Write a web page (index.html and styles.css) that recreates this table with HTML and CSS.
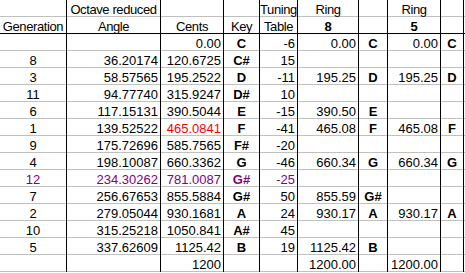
FILE: index.html
```html
<!DOCTYPE html>
<html>
<head>
<meta charset="utf-8">
<link rel="stylesheet" href="styles.css">
</head>
<body>
<div class="sheet">
  <div class="row head"><span></span><span>Octave reduced</span><span></span><span></span><span>Tuning</span><span>Ring</span><span></span><span>Ring</span><span></span></div>
  <div class="row head sep"><span>Generation</span><span>Angle</span><span>Cents</span><span>Key</span><span>Table</span><span class="b">8</span><span></span><span class="b">5</span><span></span></div>
  <div class="row"><span></span><span></span><span>0.00</span><span>C</span><span>-6</span><span>0.00</span><span>C</span><span>0.00</span><span>C</span></div>
  <div class="row"><span>8</span><span>36.20174</span><span>120.6725</span><span>C#</span><span>15</span><span></span><span></span><span></span><span></span></div>
  <div class="row"><span>3</span><span>58.57565</span><span>195.2522</span><span>D</span><span>-11</span><span>195.25</span><span>D</span><span>195.25</span><span>D</span></div>
  <div class="row"><span>11</span><span>94.77740</span><span>315.9247</span><span>D#</span><span>10</span><span></span><span></span><span></span><span></span></div>
  <div class="row"><span>6</span><span>117.15131</span><span>390.5044</span><span>E</span><span>-15</span><span>390.50</span><span>E</span><span></span><span></span></div>
  <div class="row"><span>1</span><span>139.52522</span><span class="red">465.0841</span><span>F</span><span>-41</span><span>465.08</span><span>F</span><span>465.08</span><span>F</span></div>
  <div class="row"><span>9</span><span>175.72696</span><span>585.7565</span><span>F#</span><span>-20</span><span></span><span></span><span></span><span></span></div>
  <div class="row"><span>4</span><span>198.10087</span><span>660.3362</span><span>G</span><span>-46</span><span>660.34</span><span>G</span><span>660.34</span><span>G</span></div>
  <div class="row pur"><span>12</span><span>234.30262</span><span>781.0087</span><span>G#</span><span>-25</span><span></span><span></span><span></span><span></span></div>
  <div class="row"><span>7</span><span>256.67653</span><span>855.5884</span><span>G#</span><span>50</span><span>855.59</span><span>G#</span><span></span><span></span></div>
  <div class="row"><span>2</span><span>279.05044</span><span>930.1681</span><span>A</span><span>24</span><span>930.17</span><span>A</span><span>930.17</span><span>A</span></div>
  <div class="row"><span>10</span><span>315.25218</span><span>1050.841</span><span>A#</span><span>45</span><span></span><span></span><span></span><span></span></div>
  <div class="row"><span>5</span><span>337.62609</span><span>1125.42</span><span>B</span><span>19</span><span>1125.42</span><span>B</span><span></span><span></span></div>
  <div class="row"><span></span><span></span><span>1200</span><span></span><span></span><span>1200.00</span><span></span><span>1200.00</span><span></span></div>
</div>
</body>
</html>
```
FILE: styles.css
```css
html, body {
  margin: 0;
  padding: 0;
  background: #fff;
}
.sheet {
  width: 465px;
  font-family: "Liberation Sans", Arial, sans-serif;
  font-size: 13px;
  color: #000;
}
.row {
  display: grid;
  grid-template-columns: 67px 94px 63px 36px 38px 61px 29px 53px 23px;
  height: 17px;
  background: linear-gradient(to top, #c0c0c0 1px, transparent 1px);
}
.row.sep {
  background: linear-gradient(to top, #000 1px, transparent 1px);
}
.row > span {
  box-sizing: border-box;
  height: 17px;
  border-right: 1px solid #000;
  padding: 3px 2px 0;
  line-height: 13px;
  white-space: nowrap;
  text-align: right;
}
.row > span:nth-child(1),
.row > span:nth-child(4),
.row > span:nth-child(7),
.row > span:nth-child(9) {
  text-align: center;
}
.row > span:nth-child(4),
.row > span:nth-child(7),
.row > span:nth-child(9) {
  font-weight: bold;
}
.row.head > span {
  text-align: center;
  font-weight: normal;
  padding-left: 0;
  padding-right: 0;
  letter-spacing: -0.4px;
}
.row.head > span.b {
  font-weight: bold;
}
.red {
  color: #ff0000;
}
.pur {
  color: #800080;
}
```
